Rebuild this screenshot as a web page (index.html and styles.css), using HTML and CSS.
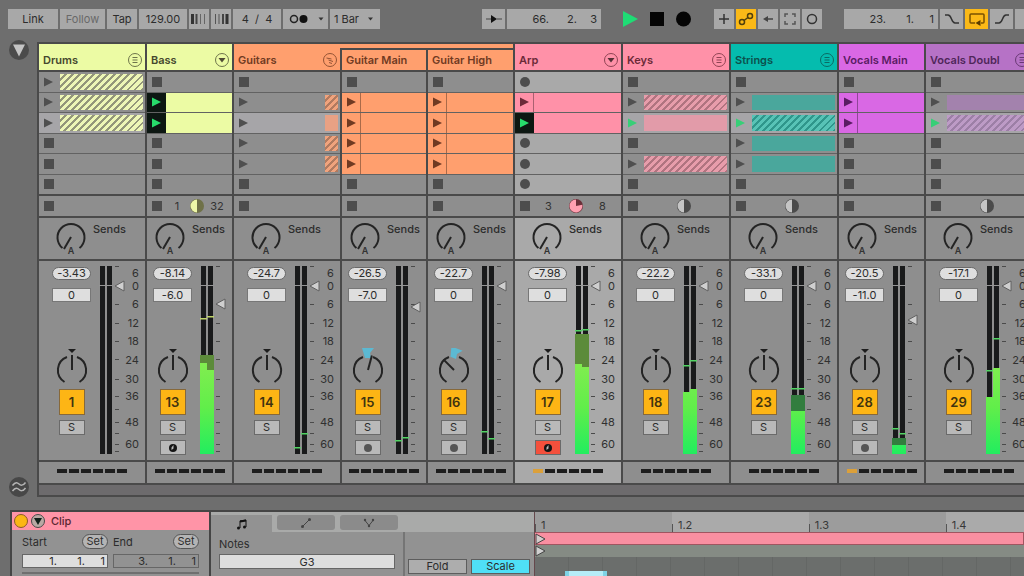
FILE: index.html
```html
<!DOCTYPE html>
<html lang="en">
<head>
<meta charset="utf-8">
<title>Session View</title>
<link rel="stylesheet" href="styles.css">
</head>
<body>
<header class="toolbar">
  <div class="group">
    <button class="btn w50">Link</button>
    <button class="btn w45 muted">Follow</button>
    <button class="btn w30">Tap</button>
    <input class="btn w48" aria-label="Tempo" value="129.00">
    <button class="btn w20" aria-label="Nudge down"><svg width="16" height="12"><path d="M1.5 1v10" stroke="#333" stroke-width="3"/><path d="M5.5 1v10" stroke="#444" stroke-width="2"/><path d="M9.500 1v10M13.500 1v10" stroke="#666"/></svg></button>
    <button class="btn w20" aria-label="Nudge up"><svg width="16" height="12"><path d="M14 1v10" stroke="#333" stroke-width="3"/><path d="M10 1v10" stroke="#444" stroke-width="2"/><path d="M2.500 1v10M6 1v10" stroke="#555"/></svg></button>
    <input class="btn w48" aria-label="Time signature" value="4  /  4">
    <button class="btn w45" aria-label="Metronome"><svg width="38" height="12"><circle cx="7" cy="6" r="3.500" fill="none" stroke="#222" stroke-width="1.500"/><circle cx="16.500" cy="6" r="4" fill="#111"/><path d="M31.500 4.500h5l-2.500 3z" fill="#333"/></svg></button>
    <button class="btn w50">1 Bar <svg width="14" height="12"><path d="M6 4.500h5l-2.500 3z" fill="#333"/></svg></button>
  </div>
  <div class="group transport">
    <button class="btn w23" aria-label="Follow playback"><svg width="18" height="12"><path d="M1 6h5M12 6h5" stroke="#444"/><path d="M6 2l6 4-6 4z" fill="#111"/></svg></button>
    <div class="position w94" role="group" aria-label="Song position"><input aria-label="Bar" value="66."><input aria-label="Beat" value="2."><input class="last" aria-label="Sixteenth" value="3"></div>
  </div>
  <div class="group play">
    <button class="bare" aria-label="Play"><svg width="16" height="18"><path d="M0 1l15 8-15 8z" fill="#1fdc75"/></svg></button>
    <button class="bare" aria-label="Stop"><svg width="15" height="18"><path d="M0 2h14v14H0z" fill="#050505"/></svg></button>
    <button class="bare" aria-label="Record"><svg width="16" height="18"><circle cx="7.500" cy="9" r="7.500" fill="#050505"/></svg></button>
  </div>
  <div class="group tools">
    <button class="btn w20" aria-label="Overdub"><svg width="14" height="14"><path d="M7 2v10M2 7h10" stroke="#333" stroke-width="1.500"/></svg></button>
    <button class="btn w20 on" aria-label="Automation arm"><svg width="16" height="14" fill="none" stroke="#51400c" stroke-width="1.500"><circle cx="4" cy="10" r="2.500"/><circle cx="12" cy="4" r="2.500"/><path d="M6 8.500l4-3"/></svg></button>
    <button class="btn w20" aria-label="Re-enable automation"><svg width="14" height="14"><path d="M5 7h7" stroke="#444" stroke-width="1.500"/><path d="M2 7l5-3v6z" fill="#444"/></svg></button>
    <button class="btn w20" aria-label="Capture"><svg width="14" height="14"><path d="M2 5V2h3M9 2h3v3M12 9v3H9M5 12H2V9" fill="none" stroke="#555" stroke-width="1.500"/></svg></button>
    <button class="btn w20" aria-label="Session record"><svg width="14" height="14"><circle cx="7" cy="7" r="4.500" fill="none" stroke="#333" stroke-width="1.500"/></svg></button>
  </div>
  <div class="group">
    <div class="position w94" role="group" aria-label="Loop start"><input aria-label="Bar" value="23."><input aria-label="Beat" value="1."><input class="last" aria-label="Sixteenth" value="1"></div>
    <button class="btn w23" aria-label="Punch in"><svg width="18" height="14"><path d="M2 3h3c4 0 3 8 7 8h4" fill="none" stroke="#333" stroke-width="1.500"/></svg></button>
    <button class="btn w23 on" aria-label="Loop"><svg width="18" height="14"><path d="M7 11H3q-1 0-1-1V3q0-1 1-1h12q1 0 1 1v7q0 1-1 1h-2" fill="none" stroke="#7a5200" stroke-width="1.500"/><path d="M12.500 8v6l-5-3z" fill="#5a3c00"/></svg></button>
    <button class="btn w23" aria-label="Punch out"><svg width="18" height="14"><path d="M2 11h4c4 0 3-8 7-8h3" fill="none" stroke="#333" stroke-width="1.500"/></svg></button>
    <input class="btn w94" aria-label="Loop length" value="">
  </div>
</header>

<main class="workspace">
  <nav class="rail">
    <button class="round" aria-label="Toggle browser"><svg width="20" height="20"><circle cx="10" cy="10" r="10" fill="#4b4b4b"/><path d="M4 4.500h12l-6 12z" fill="#c4c4c4"/></svg></button>
    <button class="round" aria-label="Groove pool"><svg width="20" height="20"><circle cx="10" cy="10" r="10" fill="#474747"/><path d="M3.500 8.500c3-4 5-3 6.500-1.500s4 2 6.500-1.500M3.500 14c3-4 5-3 6.500-1.500s4 2 6.500-1.500" fill="none" stroke="#b5b5b5" stroke-width="1.500"/></svg></button>
  </nav>
  <section class="session" aria-label="Session">
    <div class="tracks" id="tracks"></div>
    <div class="scrollbar"></div>
  </section>
</main>

<section class="detail" aria-label="Clip detail">
  <div class="clip-box">
    <h2 class="clip-title">
      <svg width="34" height="16"><circle cx="9" cy="8" r="6.500" fill="#fcb615" stroke="#8b5a28"/><circle cx="26" cy="8" r="6.500" fill="#b9a9a4" stroke="#494949"/><path d="M22 5h8l-4 7z" fill="#10201a"/></svg>
      Clip
    </h2>
    <div class="clip-fields">
      <div class="field">
        <div class="field-head"><span>Start</span><button class="set">Set</button></div>
        <div class="position boxed" role="group" aria-label="Start"><input aria-label="Start bar" value="1."><input aria-label="Start beat" value="1."><input class="last" aria-label="Start sixteenth" value="1"></div>
      </div>
      <div class="field">
        <div class="field-head"><span>End</span><button class="set">Set</button></div>
        <div class="position boxed dim" role="group" aria-label="End"><input aria-label="End bar" value="3."><input aria-label="End beat" value="1."><input class="last" aria-label="End sixteenth" value="1"></div>
      </div>
    </div>
  </div>
  <div class="editor">
    <div class="editor-side">
      <div class="tabs">
        <button class="tab active" aria-label="Notes tab"><svg width="14" height="14"><path d="M5 11V4l6-1v7" fill="none" stroke="#111"/><path d="M5 4.500l6-1" stroke="#111" stroke-width="2"/><circle cx="3.500" cy="11" r="1.500" fill="#111"/><circle cx="9.500" cy="10" r="1.500" fill="#111"/></svg></button>
        <button class="tab" aria-label="Envelopes tab"><svg width="14" height="14"><path d="M4 10l6-6" stroke="#444"/><circle cx="3.500" cy="10.500" r="1.500" fill="#444"/><circle cx="10.500" cy="3.500" r="1.500" fill="#444"/></svg></button>
        <button class="tab" aria-label="Expression tab"><svg width="14" height="14"><path d="M3 4.500l4 5 4-5" fill="none" stroke="#444"/><circle cx="3" cy="4" r="1.200" fill="#444"/><circle cx="11" cy="4" r="1.200" fill="#444"/><circle cx="7" cy="10" r="1.200" fill="#444"/></svg></button>
      </div>
      <div class="side-body">
        <div class="notes"><label for="pitch">Notes</label><input id="pitch" class="pitch" value="G3"></div>
        <div class="modes"><button class="mode">Fold</button><button class="mode scale-on">Scale</button></div>
      </div>
    </div>
    <div class="timeline">
      <div class="ruler"><span>1</span><span>1.2</span><span>1.3</span><span>1.4</span></div>
      <div class="loop"><svg width="11" height="12"><path d="M1 1l9 5-9 5z" fill="#d4cccc" stroke="#444"/></svg></div>
      <div class="marker"><svg width="11" height="12"><path d="M1 1l9 5-9 5z" fill="#d0d0d0" stroke="#444"/></svg></div>
      <div class="roll"><div class="note"></div></div>
    </div>
  </div>
</section>
<script src="app.js"></script>
</body>
</html>
```

FILE: styles.css
```css
* { box-sizing: border-box; }

body {
  margin: 0;
  height: 100vh;
  overflow: hidden;
  display: flex;
  flex-direction: column;
  background: #6e6e6e;
  color: #2c2c2c;
  font: 11px/14px Inter, "Open Sans", sans-serif;
}

button, input { font: inherit; color: inherit; border: 0; border-radius: 0; margin: 0; padding: 0; min-width: 0; }
svg { display: block; flex: none; }

/* Toolbar */
.toolbar { display: flex; flex: none; gap: 22px; padding: 9px 0 11px 8px; overflow: hidden; white-space: nowrap; }
.group { display: flex; flex: none; gap: 2px; }
.transport { margin-left: 80px; }
.play { gap: 11px; align-items: center; }
.btn { height: 20px; flex: none; display: flex; align-items: center; justify-content: center; background: #a8a8a8; text-align: center; white-space: pre; }
.muted { color: #696969; }
.on { background: #fbb917; }
.bare { background: none; }
.w20 { width: 20px; }
.w23 { width: 23px; }
.w30 { width: 30px; }
.w45 { width: 45px; }
.w48 { width: 48px; }
.w50 { width: 50px; }
.w94 { width: 94px; }
.position { height: 20px; display: flex; justify-content: flex-end; background: #a8a8a8; padding-right: 4px; }
.position input { width: 28px; background: none; text-align: right; }
.position .last { width: 20px; }

/* Session */
.workspace { display: flex; flex: none; }
.rail { width: 37px; flex: none; display: flex; flex-direction: column; justify-content: space-between; padding-left: 9px; }
.round { width: 20px; height: 20px; background: none; }
.session { flex: 1; min-width: 0; margin-top: 2px; border: 2px solid #4a4a4a; border-right: 0; background: #4a4a4a; overflow: hidden; }
.tracks { display: flex; gap: 2px; }
.scrollbar { height: 10px; margin-top: 2px; background: #6d6b6d; }

.track { --cell: #8e8e8e; --pad: 13px; width: 106px; flex: none; display: flex; flex-direction: column; gap: 2px; }
.track.narrow { --pad: 6px; width: 85px; }
.track.inner { width: 84px; }
.track.selected { --cell: #a9a9a9; }

.title { height: 26px; margin: 0; padding: 6px 2px 0 4px; display: flex; align-items: center; justify-content: space-between; background: var(--color); color: var(--ink); font-size: 11px; font-weight: 600; white-space: nowrap; }
.title svg { opacity: .75; }
.title.child { position: relative; border-top: 4px solid var(--color); padding-top: 2px; box-shadow: inset 0 2px #4a4a4a; }
.title.child::before { content: ""; position: absolute; top: -4px; left: -2px; width: 2px; height: 4px; background: var(--color); }

.slots { height: 122px; display: grid; grid-template-rows: repeat(6, 1fr); gap: 1px; background: #626262; }
.slot { display: flex; align-items: stretch; min-height: 0; background: var(--cell); }
.slot.scene { background: #a6a5a8; }
.launch { width: 20px; flex: none; display: flex; align-items: center; padding-left: 5px; background: none; }
.clip { flex: 1; margin: 2px 2px 2px 1px; background: var(--color); }
.clip.hatched { background: repeating-linear-gradient(135deg, var(--stripe) 0 3px, var(--gap) 3px 5px); }
.clip.stub { flex: none; width: 13px; margin-left: auto; }
.clip.flat { background: var(--flat); }
.slot.full { background: var(--color); }
.slot.full .launch { width: 19px; border-right: 1px solid #00000055; }
.slot.full .clip { margin: 0; }
.slot.playing .launch { background: #0d1712; border: 0; }

.status { height: 20px; display: flex; align-items: center; padding: 0 5px; background: #8e8e8e; }
.count { flex: 1; display: grid; grid-template-columns: repeat(3, 1fr); place-items: center; padding-left: 5px; color: #333; }
.stop { width: 10px; height: 10px; background: #4d4d4d; flex: none; }

.sends { height: 41px; display: flex; align-items: flex-start; gap: 7px; padding: 4px 0 0 17px; background: var(--cell); font-weight: 500; }
.narrow .sends { padding-left: 8px; }

.mixer { height: 199px; display: flex; padding: 5px 7px 0 var(--pad); background: var(--cell); }
.controls { width: 39px; flex: none; display: flex; flex-direction: column; align-items: center; padding-top: 1px; margin-right: 9px; }
.peak { width: 39px; height: 13px; border-radius: 7px; background: #dedede; border: 1px solid #696969; line-height: 11px; text-align: center; }
.volume { width: 39px; height: 14px; margin-top: 8px; background: #dedede; border: 1px solid #777; text-align: center; }
.pan { margin-top: 46px; }
.number { width: 26px; height: 26px; margin-top: 5px; background: #fdb515; border: 1px solid #86683a; color: #3f3310; font-size: 13px; font-weight: 600; }
.small { width: 26px; height: 15px; margin-top: 5px; display: flex; align-items: center; justify-content: center; background: #b9b9b9; border: 1px solid #6a6a6a; line-height: 13px; }
.small.armed { background: #f4503c; }
.scale { list-style: none; margin: 1px 0 0; padding: 0; flex: 1; color: #303030; }
.scale li { display: flex; align-items: flex-end; justify-content: flex-end; line-height: 12px; }

.beats { height: 21px; display: flex; align-items: center; justify-content: center; gap: 2px; padding-bottom: 3px; background: var(--cell); }
.beats i { width: 10px; height: 4px; background: #1d1d1d; }
.beats i.lit { background: #dba03a; }

/* Clip detail */
.detail { flex: 1; min-height: 60px; display: flex; gap: 2px; margin: 13px 0 0 10px; border: 2px solid #454545; border-right: 0; border-bottom: 0; background: #454545; }
.clip-box { width: 197px; flex: none; background: #929292; }
.clip-title { display: flex; align-items: center; gap: 5px; height: 18px; margin: 0; background: #ff94a7; color: #5a2630; font-size: 11px; font-weight: 500; }
.clip-fields { display: flex; gap: 5px; margin: 4px 10px 0; padding-bottom: 4px; border-bottom: 2px solid #6f6f6f; }
.field { flex: 1; min-width: 0; }
.field-head { display: flex; align-items: center; justify-content: space-between; height: 15px; margin-bottom: 5px; }
.set { width: 26px; height: 15px; background: #b4b4b4; border: 1px solid #555; border-radius: 8px; line-height: 13px; }
.position.boxed { height: 14px; background: #dedede; border: 1px solid #666; padding-right: 2px; }
.position.dim { background: #929292; }

.editor { flex: 1; min-width: 0; display: flex; background: #929292; }
.editor-side { width: 323px; flex: none; display: flex; flex-direction: column; }
.tabs { display: flex; gap: 5px; height: 20px; padding-top: 3px; background: #a9aaa9; }
.tab { width: 58px; margin-bottom: 2px; display: flex; align-items: center; justify-content: center; background: #8b8b8b; border-radius: 3px; }
.tab.active { width: 61px; margin-bottom: 0; background: #929292; border-radius: 0; }
.side-body { flex: 1; display: flex; }
.notes { width: 194px; padding: 5px 8px 0; border-right: 2px solid #757575; }
.notes label { display: block; }
.pitch { width: 100%; height: 15px; margin-top: 3px; background: #dedede; border: 1px solid #666; text-align: center; }
.modes { flex: 1; display: flex; gap: 4px; padding: 27px 4px 0 3px; }
.mode { flex: 1; height: 15px; background: #adadad; border: 1px solid #5d5d5d; line-height: 13px; }
.mode.scale-on { background: #4fe0f7; }

.timeline { flex: 1; min-width: 0; display: flex; flex-direction: column; border-left: 1px solid #65484c; overflow: hidden; }
.ruler { display: flex; flex: none; height: 20px; }
.ruler span { width: 28%; flex: none; padding: 6px 0 0 6px; color: #383838; background: linear-gradient(#555, #555) left bottom / 1px 8px no-repeat #9c9c9c; }
.ruler span:nth-child(even) { background-color: #aaa; }
.loop { flex: none; height: 13px; background: #f98fa1; border: 1px solid #a05560; border-left: 0; }
.marker { flex: none; height: 12px; background: #858b84; }
.roll { flex: 1; padding: 14px 0 0 30px; background: repeating-linear-gradient(90deg, #6b6e6c 0 33px, #646765 33px 34px); }
.note { width: 42px; height: 12px; background: #b6ecf7; border: solid #7ed3e6; border-width: 0 4px; }
```

FILE: app.js
```js
const GREEN = '#27dc6b';
const SCALE = [['6', 12], ['0', 13], ['6', 18], ['12', 19], ['18', 18], ['24', 19], ['30', 19], ['36', 17], ['48', 26], ['60', 22]];
const TICKS = [0, 38, 57, 75, 93, 113, 130, 143, 156, 167, 178, 185];

// Slots: s stop, o record, p play, h hatched clip, f flat clip, b stub, c clip, g playing clip; + marks a live follower.
const tracks = [
  { name: 'Drums', color: '#ecfba4', ink: '#45482e', icon: 'list', slots: 'h h h s s s', stripe: '#edf6b6', gap: '#93967a', peak: '-3.43', vol: '0', no: 1, fader: 20 },
  { name: 'Bass', color: '#ecfba4', ink: '#45482e', icon: 'fold', narrow: 1, slots: 's g g s s s', count: ['1', 50, '32', '#eef7a8', '#6f7148'], peak: '-8.14', vol: '-6.0', no: 13, rec: 'midi', fader: 38, bars: [[97, 89, 52], [104, 89, 50]], line: '#c0d46a' },
  { name: 'Guitars', color: '#ff9f6e', ink: '#703a22', icon: 'tilt', slots: 's b b b b s', stripe: '#f0a37d', gap: '#b17a5f', flat: '#e9a184', peak: '-24.7', vol: '0', no: 14, fader: 20, bars: [[188, 188, 181], [188, 188, 167]] },
  { name: 'Guitar Main', color: '#ff9f6e', ink: '#703a22', child: 1, narrow: 1, inner: 1, slots: 's c c c c s', peak: '-26.5', vol: '-7.0', no: 15, rec: 'dot', pan: 15, fader: 41, bars: [[188, 188, 174], [188, 188, 171]] },
  { name: 'Guitar High', color: '#ff9f6e', ink: '#703a22', child: 1, narrow: 1, slots: 's c c c c s', peak: '-22.7', vol: '0', no: 16, rec: 'dot', pan: -45, fader: 20, bars: [[188, 188, 165], [188, 188, 172]] },
  { name: 'Arp', color: '#ff91a8', ink: '#6b2a38', icon: 'fold', selected: 1, slots: 'o c g o o o', count: ['3', 78, '8', '#ff9fb0', '#6b3039'], peak: '-7.98', vol: '0', no: 17, rec: 'armed', lit: 1, fader: 20, bars: [[98, 68, 64], [101, 68, 63]] },
  { name: 'Keys', color: '#ff91a8', ink: '#6b2a38', icon: 'list', slots: 's h f+ s h s', stripe: '#e79dab', gap: '#b07480', flat: '#e29ba9', count: ['', 50, '', '#c5c5c5', '#4b4b4b'], peak: '-22.2', vol: '0', no: 18, fader: 20, bars: [[126, 126, 99], [123, 123, 94]] },
  { name: 'Strings', color: '#05bcae', ink: '#0c514c', icon: 'list', slots: 's f h+ f f s', stripe: '#58c3b6', gap: '#2f968b', flat: '#4aa79c', count: ['', 50, '', '#c5c5c5', '#4b4b4b'], peak: '-33.1', vol: '0', no: 23, fader: 20, bars: [[145, 129, 122], [145, 129, 122]] },
  { name: 'Vocals Main', color: '#d968e4', ink: '#5a1c63', narrow: 1, slots: 's c c s s s', peak: '-20.5', vol: '-11.0', no: 28, rec: 'dot', lit: 1, fader: 54, bars: [[179, 172, 162], [179, 172, 167]] },
  { name: 'Vocals Doubl', color: '#b672c6', ink: '#4f2659', icon: 'list', slots: 's f h+ s s s', stripe: '#bd9bc6', gap: '#9c7fa6', flat: '#a382ad', count: ['', 50, '', '#c5c5c5', '#4b4b4b'], peak: '-17.1', vol: '0', no: 29, fader: 20, bars: [[131, 131, 104], [102, 102, 72]] }
];

const svg = (w, h, body) => `<svg width="${w}" height="${h}" viewBox="0 0 ${w} ${h}">${body}</svg>`;
const stopIcon = svg(10, 10, '<path d="M0 0h10v10H0z" fill="#4d4d4d"/>');
const recordIcon = svg(10, 10, '<circle cx="5" cy="5" r="5" fill="#4d4d4d"/>');
const playIcon = color => svg(10, 10, `<path d="M0 .5l9 4.500-9 4.500z" fill="${color}"/>`);

function headIcon(type, ink) {
  if (!type) return '';
  const inner = {
    list: `<path d="M5.500 5.500h5M5.500 8h5M5.500 10.500h5" stroke="${ink}"/>`,
    tilt: `<path d="M4.500 6l5 1M6.500 8l4.500 1.500M7 10.500l3 1" stroke="${ink}"/>`,
    fold: `<path d="M4.500 6h7L8 10.500z" fill="#1b1010"/>`
  }[type];
  return svg(16, 16, `<circle cx="8" cy="8" r="6.500" fill="none" stroke="${ink}"/>${inner}`);
}

function slot(code, row, t) {
  const kind = code[0];
  const live = code[1] === '+';
  let cls = 'slot', icon = playIcon('#4f4f4f'), clip = '';
  if (kind === 's') icon = stopIcon;
  if (kind === 'o') icon = recordIcon;
  if (kind === 'h') clip = '<div class="clip hatched"></div>';
  if (kind === 'f') clip = '<div class="clip flat"></div>';
  if (kind === 'b') clip = `<div class="clip stub ${row === 2 ? 'flat' : 'hatched'}"></div>`;
  if (kind === 'c') { cls += ' full'; icon = playIcon(t.ink); }
  if (kind === 'g') { cls += ' full playing'; icon = playIcon(GREEN); }
  if (live) icon = playIcon('#37cf77');
  if (row === 2 && 'hfb'.includes(kind)) cls += ' scene';
  return `<div class="${cls}"><button class="launch" aria-label="${t.name} slot ${row + 1}">${icon}</button>${clip}</div>`;
}

function pie([left, percent, right, on, off]) {
  const a = percent / 100 * Math.PI * 2;
  const x = 8 - 6.5 * Math.sin(a), y = 8 - 6.5 * Math.cos(a);
  const big = percent > 50 ? 1 : 0;
  return `<div class="count"><span>${left}</span>${svg(16, 16,
    `<circle cx="8" cy="8" r="7" fill="${off}"/><path d="M8 8V1.500A6.500 6.500 0 ${big} 0 ${x} ${y}z" fill="${on}"/>`)}<span>${right}</span></div>`;
}

const sendKnob = svg(30, 36,
  '<path d="M6.500 26A13.500 13.500 0 1 1 23.500 26" fill="none" stroke="#242424" stroke-width="2"/>' +
  '<path d="M15 15L8 27" stroke="#242424" stroke-width="2"/>' +
  '<text x="15" y="32" text-anchor="middle" font-size="9" font-weight="600" fill="#333">A</text>');

function panKnob(angle = 0) {
  const tip = angle ? '#5cb9d2' : '#1d1d1d';
  const top = angle ? `<path d="M10 0h12l-4 5 1 5h-6z" fill="${tip}" ${angle < 0 ? 'transform="rotate(22 16 8)"' : ''}/>` : `<path d="M12 1h8l-4 4z" fill="${tip}"/>`;
  return `<svg class="pan" width="32" height="36" viewBox="0 0 32 36">${top}
    <path d="M8.500 34A14 14 0 0 1 11 9M21 9A14 14 0 0 1 23.500 34" fill="none" stroke="#242424" stroke-width="2"/>
    <path d="M16 22V7" stroke="#242424" stroke-width="2" transform="rotate(${angle} 16 22)"/></svg>`;
}

function meter(t) {
  const bars = t.bars || [];
  let out = '<path d="M0 0h5v188H0zM7 0h5v188H7z" fill="#191a1b"/>';
  bars.forEach(([level, shade, peak], i) => {
    const x = i ? 6 : -1;
    if (shade < 188) out += `<rect x="${x}" y="${shade}" width="7" height="${188 - shade}" fill="${level < 140 ? '#5c8b3a' : '#327d3e'}"/>`;
    if (level < 188) out += `<rect x="${x}" y="${level}" width="7" height="${188 - level}" fill="url(#level)"/>`;
    out += `<rect x="${x}" y="${peak}" width="7" height="1.500" fill="${t.line || '#54d365'}"/>`;
  });
  out += '<path d="M-1 19.500h14" stroke="#969696"/>';
  TICKS.forEach(y => { out += `<path d="M15 ${y + .5}h4" stroke="#4a4a4a"/>`; });
  out += `<path d="M15 ${t.fader}l9-5v10z" fill="#cfcfcf" stroke="#606060"/>`;
  return `<svg width="25" height="189" viewBox="0 0 25 189" overflow="visible"><defs><linearGradient id="level" gradientUnits="userSpaceOnUse" x1="0" y1="95" x2="0" y2="188"><stop offset="0" stop-color="#83ed50"/><stop offset=".5" stop-color="#61ee4a"/><stop offset="1" stop-color="#22ed5f"/></linearGradient></defs>${out}</svg>`;
}

function recButton(kind, name) {
  if (!kind) return '';
  const icon = kind === 'dot'
    ? svg(12, 10, '<circle cx="6" cy="5" r="4" fill="#555"/>')
    : svg(12, 10, '<circle cx="6" cy="5" r="4" fill="#151515"/><path d="M6.500 2v3.500L4.500 7V4.500z" fill="#bbb"/>');
  return `<button class="small ${kind === 'armed' ? 'armed' : ''}" aria-label="Arm ${name}">${icon}</button>`;
}

function render(t) {
  const cls = ['track', t.narrow && 'narrow', t.inner && 'inner', t.selected && 'selected'].filter(Boolean).join(' ');
  const vars = `--color:${t.color};--ink:${t.ink};--stripe:${t.stripe};--gap:${t.gap};--flat:${t.flat}`;
  const scale = t.narrow ? '' : `<ol class="scale">${SCALE.map(([n, h]) => `<li style="height:${h}px">${n}</li>`).join('')}</ol>`;
  return `<article class="${cls}" style="${vars}">
    <h3 class="title ${t.child ? 'child' : ''}">${t.name}${headIcon(t.icon, t.ink)}</h3>
    <div class="slots">${t.slots.split(' ').map((c, i) => slot(c, i, t)).join('')}</div>
    <div class="status"><button class="stop" aria-label="Stop ${t.name}"></button>${t.count ? pie(t.count) : ''}</div>
    <div class="sends">${sendKnob}<span>Sends</span></div>
    <div class="mixer">
      <div class="controls">
        <div class="peak">${t.peak}</div>
        <input class="volume" aria-label="${t.name} volume" value="${t.vol}">
        ${panKnob(t.pan)}
        <button class="number">${t.no}</button>
        <button class="small">S</button>
        ${recButton(t.rec, t.name)}
      </div>
      ${meter(t)}${scale}
    </div>
    <div class="beats">${[0, 1, 2, 3, 4, 5].map(i => `<i class="${t.lit && i === 0 ? 'lit' : ''}"></i>`).join('')}</div>
  </article>`;
}

document.getElementById('tracks').innerHTML = tracks.map(render).join('');
```
